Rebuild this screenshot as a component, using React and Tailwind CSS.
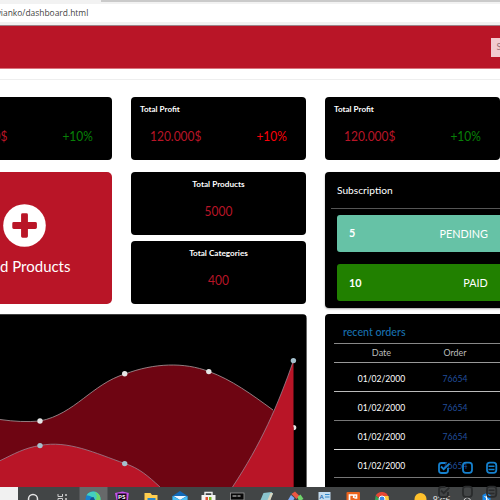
import React from "react";

const lato = "font-['Lato','Liberation_Sans',sans-serif]";

function ProfitCard({ change, tone }) {
  return (
    <div className="h-[63px] w-[175px] shrink-0 rounded-[4px] bg-black">
      <div className="pt-[6.5px] pl-[9px] text-[8.1px] leading-[10px] font-bold whitespace-nowrap text-white">Total Profit</div>
      <div className="flex justify-between pt-[14px] pr-[19px] pl-[18.5px] text-[13.3px] leading-[16px]">
        <span className="origin-left scale-x-90 text-[#b91527]">120.000$</span>
        <span className={`origin-right scale-x-90 ${tone}`}>{change}</span>
      </div>
    </div>
  );
}

function CountCard({ title, value }) {
  return (
    <div className="h-[63px] rounded-[4px] bg-black text-center">
      <div className="pt-[6.5px] text-[8.2px] leading-[10px] font-bold text-white">{title}</div>
      <div className="scale-x-90 pt-[13px] text-[13.3px] leading-[18px] text-[#b91527]">{value}</div>
    </div>
  );
}

function SubscriptionRow({ count, label, color }) {
  return (
    <div className={`flex h-[37px] w-[175px] items-center justify-between rounded-[3px] pr-[24px] pl-[12px] text-white ${color}`}>
      <span className="origin-left scale-x-90 text-[12px] font-bold">{count}</span>
      <span className="origin-right scale-x-95 text-[11.4px]">{label}</span>
    </div>
  );
}

function OrderRow({ line }) {
  return (
    <div className={`flex h-[28.7px] items-center border-b pt-[3px] text-[9.8px] ${line}`}>
      <span className="w-[95px] scale-x-[.87] text-center text-white">01/02/2000</span>
      <span className="w-[52px] scale-x-[.88] text-center text-[#204e9c]">76654</span>
    </div>
  );
}

function Dots({ points, fill }) {
  return points.map(([x, y]) => <circle key={x} cx={x} cy={y} r="2.7" fill={fill} />);
}

function Chart() {
  return (
    <svg viewBox="0 314 307 173" className="block h-[173px] w-[307px]">
      <path d="M0 318V314.3H303Q306.6 314.3 306.6 318V487H0Z" fill="#000" />
      <Dots points={[[293.6, 427.6]]} fill="#e6e6e6" />
      <path d="M0 419.5C14 421.5 27 422.2 40 421C75 414 92 384 125 374C154 363 184 362 209 371.5C232 380 251 394 273 410L293.6 427.6V487H0Z" fill="#6e0512" />
      <path d="M0 419.5C14 421.5 27 422.2 40 421C75 414 92 384 125 374C154 363 184 362 209 371.5C232 380 251 394 273 410" fill="none" stroke="#a99a9d" strokeWidth=".8" />
      <path d="M0 460.7C14 454 24 448 40 445.5C68 440 95 453 125 463.6C139 468 148 476 160 487H0Z" fill="#b91527" />
      <path d="M232.5 487C261 444 278 405 293.5 360.5V487Z" fill="#b91527" />
      <path d="M0 460.7C14 454 24 448 40 445.5C68 440 95 453 125 463.6C139 468 148 476 160 487M232.5 487C261 444 278 405 293.5 360.5" fill="none" stroke="#9c8291" strokeWidth=".8" />
      <Dots points={[[40, 421], [124.7, 373.8], [208.8, 371.6]]} fill="#e6e6e6" />
      <Dots points={[[40, 445.6], [124.7, 463.6], [293.4, 360.6]]} fill="#a5c0cd" />
    </svg>
  );
}

function ActionIcons({ color }) {
  return (
    <svg viewBox="436 460 64 14" className={`h-[14px] w-[64px] ${color}`} fill="none" stroke="currentColor" strokeWidth="1.8">
      <path d="M445.5 463H441.5Q439 463 439 465.5V470.5Q439 473 441.5 473H445.5Q448 473 448 470.5V468M441 466.5L443.7 469.2L449.4 463.6" />
      <rect x="463" y="462.7" width="9" height="10.2" rx="2.8" />
      <rect x="487" y="462.7" width="9.3" height="10.2" rx="2.8" />
      <path d="M488.5 466.3H494.5M488.5 469.5H494.5" strokeWidth="1.5" />
    </svg>
  );
}

function Taskbar() {
  return (
    <footer className="flex h-[13px] bg-[#424546]">
      <div className="w-[17.5px] bg-[#f1f1f1]" />
      <svg viewBox="17.5 487 482.5 13" className="block h-[13px] w-[482.5px]">
        <rect x="79" y="487" width="28" height="13" fill="#67696a" />
        <circle cx="32.5" cy="499" r="4.5" fill="none" stroke="#e5e5e5" strokeWidth="1.5" />
        <path d="M57.5 494V496.5H62V494M57.5 500V498.5H62V500" fill="none" stroke="#d0d0d0" strokeWidth="1" />
        <path d="M65.5 494V496M65.5 498V500" stroke="#d0d0d0" strokeWidth="1.5" />
        <circle cx="92.5" cy="499" r="7.5" fill="#1681cf" />
        <path d="M86 495.3A7.5 7.5 0 0 1 100 500H94Q92 496 86 495.3" fill="#43cfc0" />
        <path d="M94 492A7.5 7.5 0 0 1 100 500H95Q98 496 94 492" fill="#70d665" />
        <path d="M89.5 500Q90 497 93 497L94.5 500Z" fill="#155391" />
        <path d="M114.5 493L122 491.5L128.3 493L127.5 500H116Z" fill="#c653ed" />
        <rect x="117" y="493.5" width="9" height="6.5" fill="#17051d" />
        <text x="117.5" y="499.3" fontSize="6.3" fontWeight="700" fill="#fff">PS</text>
        <path d="M144 493H150L151.5 495H157V500H144Z" fill="#ffce4f" />
        <path d="M147 500V498H155V500" fill="#2785ca" />
        <path d="M172 496L179.5 491L187 496V500H172Z" fill="#1269b8" />
        <path d="M173 496H186L179.5 500Z" fill="#eef8ff" />
        <path d="M172 496L179.5 500H172ZM187 496L179.5 500H187Z" fill="#47bff6" />
        <path d="M204.5 495V492.5H211.5V495" fill="none" stroke="#eee" strokeWidth="1.4" />
        <path d="M201 495H215V500H201Z" fill="#f3f3f3" />
        <path d="M205 497H207.5V500H205Z" fill="#e64e2e" />
        <path d="M208.5 497H211V500H208.5Z" fill="#78b51e" />
        <rect x="230" y="493" width="13.5" height="7" fill="#080808" stroke="#aaa" strokeWidth=".7" />
        <path d="M232 496H236M237 496H240" stroke="#ddd" strokeWidth="1" />
        <path d="M263 493L271 492L272.5 494L269 500H260Z" fill="#8bc5ce" />
        <path d="M270 493H272.5L270 500H267Z" fill="#d9d5be" />
        <path d="M287.5 500L290.5 495L294 498L293 500Z" fill="#7ca8f3" />
        <path d="M291 494L294.5 491.5L299 496L296 499Z" fill="#ed5644" />
        <path d="M297 497L300 494.5L303 499L301 500H298Z" fill="#70d56c" />
        <path d="M318 492H330V500H318Z" fill="#c3dcf0" />
        <text x="319" y="499" fontSize="6" fontWeight="700" fill="#2065aa">A</text>
        <path d="M324.5 494.5H329M324.5 497H329" stroke="#338acc" />
        <rect x="346" y="492" width="13.5" height="9" rx="1" fill="#ec641c" />
        <path d="M349 500V495H352Q354 495 353 498M353 495H356V498H354" fill="none" stroke="#fff" strokeWidth="1.7" />
        <path d="M375.2 495.5A7 7 0 0 1 388 497L381 500Z" fill="#e74735" />
        <path d="M375.2 495.5L380 500H374.5Z" fill="#35a454" />
        <path d="M382 496H388L388.5 500H382Z" fill="#ffcc3c" />
        <circle cx="381.5" cy="499" r="3" fill="#3f88e9" stroke="#fff" />
        <circle cx="420" cy="499" r="6" fill="#ffc12c" />
        <text x="432.5" y="501.5" fontSize="8" fill="#f4f4f4">92°F</text>
        <path d="M463.5 500Q466.5 495 470 500" fill="none" stroke="#ddd" />
        <path d="M482 495L486 493L490 495V500H482Z" fill="#1688ea" />
        <path d="M484 496L488 500M486 494V500" stroke="#fff" />
      </svg>
    </footer>
  );
}

export default function App() {
  return (
    <div className={`relative flex h-[500px] w-[500px] flex-col overflow-hidden bg-white ${lato}`}>
      <div className="flex h-[4px] shrink-0 bg-[#f2f2f2]">
        <div className="ml-[101px] h-[2px] flex-1 bg-[#cacaca]" />
      </div>
      <div className="flex h-[18px] w-[88.5px] shrink-0 justify-end font-['Open_Sans','Noto_Sans',sans-serif] text-[8.7px] leading-[18px] whitespace-nowrap text-[#444]">
        <span className="origin-right scale-x-[.97]">avianko/dashboard.html</span>
      </div>
      <div className="h-[3px] shrink-0 bg-[#f1f1f1]" />
      <header className="flex h-[44px] shrink-0 items-center justify-end border-t border-b border-t-[#9c8288] border-b-[#d9747e] bg-[#b91527]">
        <div className="h-[19px] w-[9.5px] overflow-hidden bg-[#f2cbd0] pl-[6px] text-[9px] leading-[18px] text-[#987078]">Search</div>
      </header>
      <div className="mb-[17px] h-[11px] shrink-0 border-b border-[#eee]" />

      <div className="-ml-[63px] flex h-[63px] shrink-0 gap-[19px]">
        <ProfitCard change="+10%" tone="text-[#078007]" />
        <ProfitCard change="+10%" tone="text-[#fa0009]" />
        <ProfitCard change="+10%" tone="text-[#078007]" />
      </div>

      <main className="mt-[12.4px] flex h-[314.6px] shrink-0">
        <div className="w-[307px] shrink-0">
          <div className="flex h-[132px] gap-[19px]">
            <div className="flex w-[112px] flex-col rounded-r-[5px] bg-[#b91527]">
              <svg viewBox="0 0 44 44" className="mt-[32px] ml-[3px] h-[43px] w-[43px]">
                <circle cx="22" cy="22" r="21.8" fill="#fff" />
                <path d="M18.5 11Q18.5 9.5 20 9.5H24Q25.5 9.5 25.5 11V18.5H33Q34.7 18.5 34.7 20V24Q34.7 25.5 33 25.5H25.5V33Q25.5 34.5 24 34.5H20Q18.5 34.5 18.5 33V25.5H11Q9.5 25.5 9.5 24V20Q9.5 18.5 11 18.5H18.5Z" fill="#b91527" />
              </svg>
              <div className="mt-[9px] flex w-[70px] justify-end text-[15.6px] leading-[20px] whitespace-nowrap text-white">
                <span className="origin-right scale-x-[.96]">Add Products</span>
              </div>
            </div>
            <div className="flex w-[175px] flex-col gap-[6px]">
              <CountCard title="Total Products" value="5000" />
              <CountCard title="Total Categories" value="400" />
            </div>
          </div>
          <div className="mt-[9.6px]"><Chart /></div>
        </div>

        <div className="ml-[18px] flex w-[185px] shrink-0 flex-col gap-[6px]">
          <section className="h-[135.6px] rounded-[4px] bg-black shadow-[0_1px_2px_#aaa]">
            <h2 className="ml-[6px] h-[37px] border-b border-[#555] pl-[6px] text-[10.2px] leading-[37px] text-white">Subscription</h2>
            <div className="flex flex-col gap-[12.5px] pt-[5.5px] pl-[12px]">
              <SubscriptionRow count="5" label="PENDING" color="bg-[#66c2a6]" />
              <SubscriptionRow count="10" label="PAID" color="bg-[#218000]" />
            </div>
          </section>
          <section className="h-[173px] rounded-t-[4px] bg-black pl-[9px]">
            <h2 className="h-[30px] border-b border-[#888] pt-[8px] pl-[9px] text-[10.7px] leading-[20px] font-medium text-[#1870af]">recent orders</h2>
            <div className="flex h-[19.5px] items-center border-b border-[#999] text-[9.6px] text-[#bbb]">
              <span className="w-[95px] scale-x-95 text-center">Date</span>
              <span className="w-[52px] scale-x-[.92] text-center">Order</span>
            </div>
            <OrderRow line="border-[#bbb]" />
            <OrderRow line="border-[#777]" />
            <OrderRow line="border-[#ddd]" />
            <OrderRow line="border-[#777]" />
          </section>
        </div>
      </main>
      <Taskbar />
      <div className="absolute top-[460px] left-[436px]"><ActionIcons color="text-[#1681ce]" /></div>
      <div className="absolute top-[484px] left-[436px]"><ActionIcons color="text-[#292b2c]" /></div>
    </div>
  );
}
